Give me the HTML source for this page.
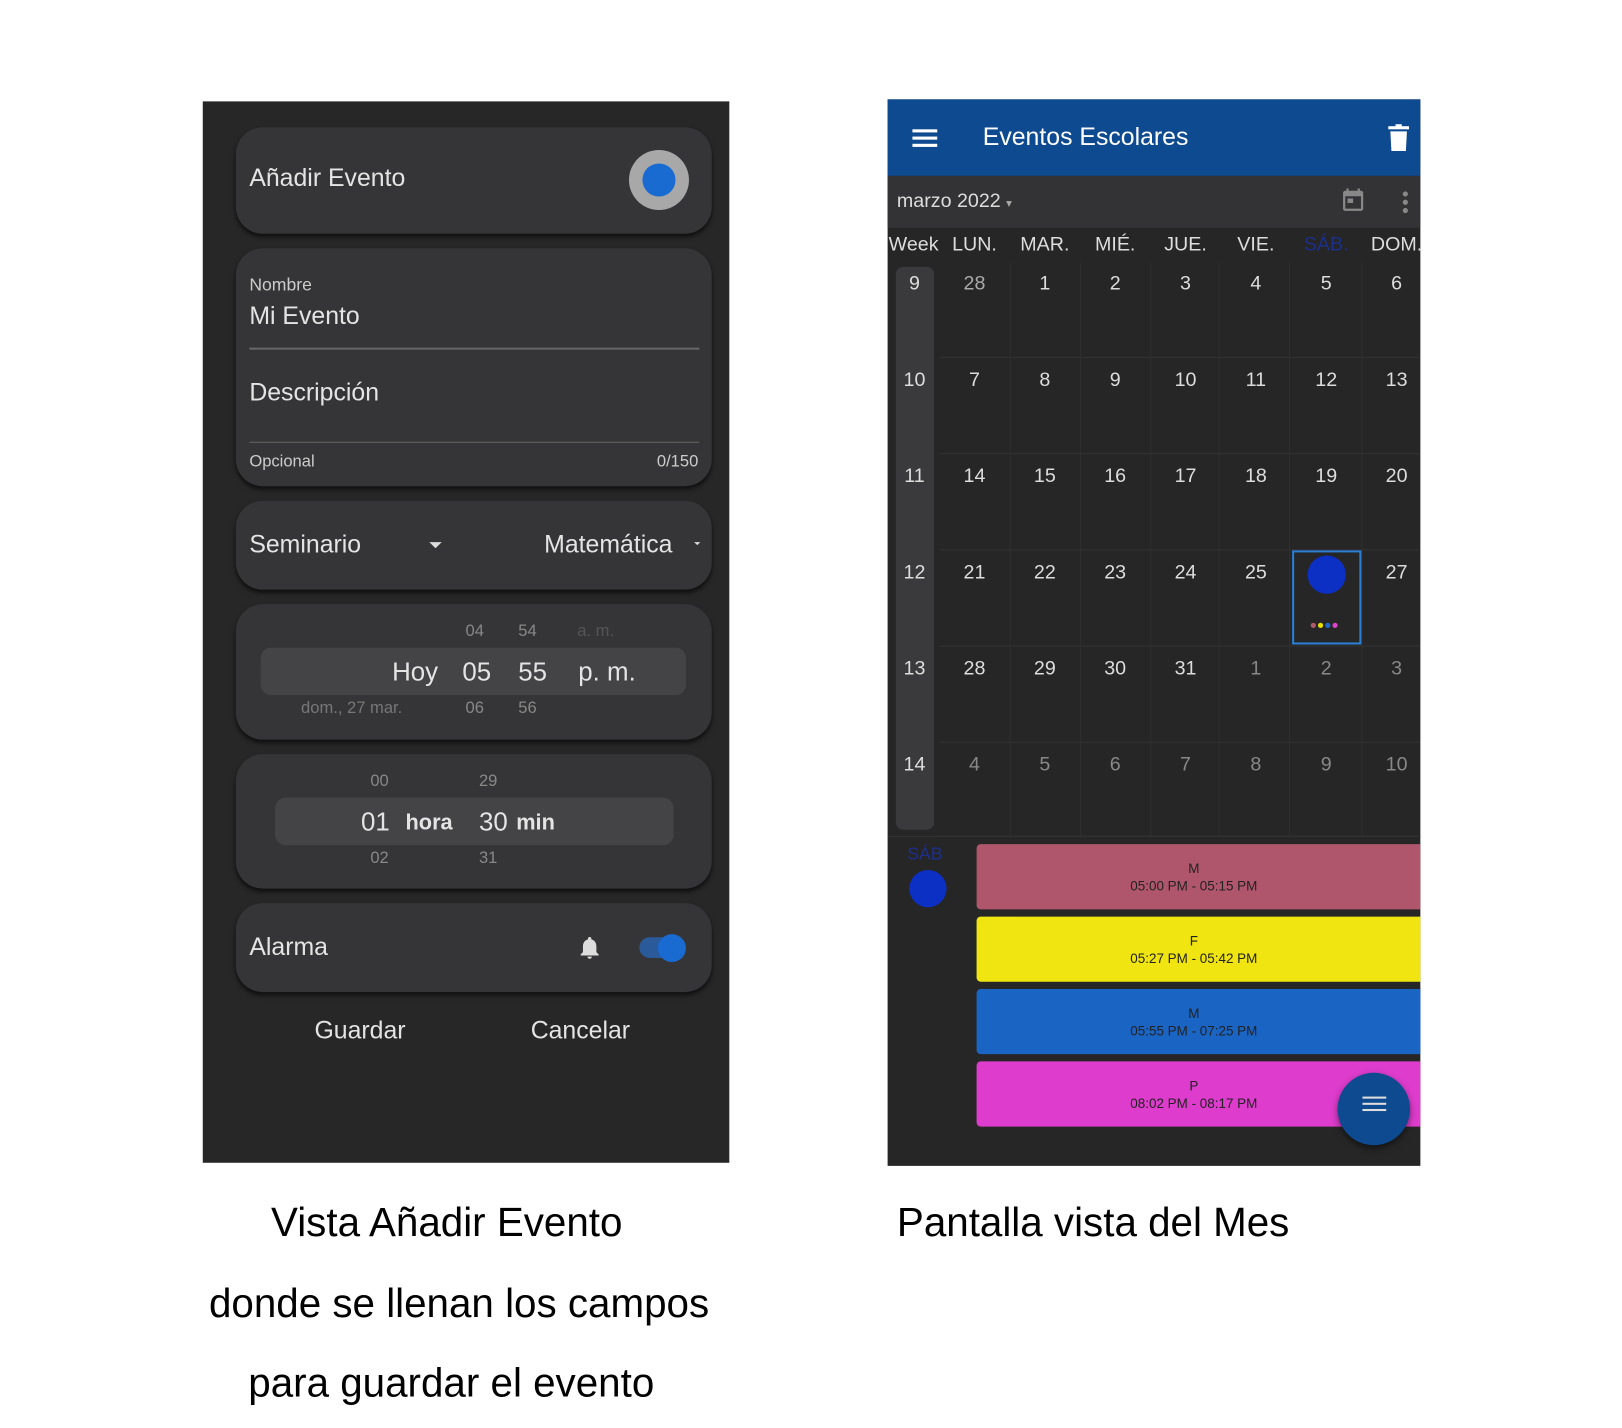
<!DOCTYPE html>
<html><head><meta charset="utf-8"><style>
*{margin:0;padding:0;box-sizing:border-box}
body{width:1622px;height:1428px;background:#fff;overflow:hidden;font-family:"Liberation Sans",sans-serif}
#w{position:absolute;left:0;top:0;width:1560px;height:1373px;transform:scale(1.0345);transform-origin:0 0}
.a{position:absolute}
.lp{left:196px;top:98px;width:509px;height:1026px;background:#272727}
.card{position:absolute;left:32px;width:460px;background:#353537;border-radius:26px;box-shadow:0 3px 4px rgba(0,0,0,.6)}
.t{position:absolute;color:#e4e4e4;white-space:nowrap}
.rp{left:858px;top:96px;width:515px;height:1031px;background:#262626;overflow:hidden}
.num{position:absolute;width:68px;text-align:center;font-size:19px;color:#ddd}
.ev{position:absolute;left:86px;width:440px;height:63px;border-radius:4px;text-align:center;font-size:13px;color:#222;line-height:17px;padding-top:15px;padding-right:20px}
.cap{position:absolute;font-size:39px;color:#000;white-space:nowrap}
</style></head><body><div id="w">
<div class="a lp">
 <div class="card" style="top:25px;height:103px">
  <div class="t" style="left:13px;top:36px;font-size:24px">Añadir Evento</div>
  <div class="a" style="left:380px;top:22px;width:58px;height:58px;border-radius:50%;background:#a8a8a8"></div>
  <div class="a" style="left:393px;top:35px;width:32px;height:32px;border-radius:50%;background:#1a6bd1"></div>
 </div>
 <div class="card" style="top:142px;height:230px">
  <div class="t" style="left:13px;top:26px;font-size:17px;color:#ccc">Nombre</div>
  <div class="t" style="left:13px;top:52px;font-size:24px">Mi Evento</div>
  <div class="a" style="left:13px;top:96px;width:435px;height:2px;background:#666"></div>
  <div class="t" style="left:13px;top:126px;font-size:24px">Descripción</div>
  <div class="a" style="left:13px;top:187px;width:435px;height:1px;background:#666"></div>
  <div class="t" style="left:13px;top:198px;font-size:16px;color:#ccc">Opcional</div>
  <div class="t" style="right:13px;top:198px;font-size:16px;color:#ccc">0/150</div>
 </div>
 <div class="card" style="top:386px;height:86px">
  <div class="t" style="left:13px;top:29px;font-size:24px">Seminario</div>
  <div class="a" style="left:187px;top:40px;border:6px solid transparent;border-top:6px solid #ddd"></div>
  <div class="t" style="left:298px;top:29px;font-size:24px">Matemática</div>
  <div class="a" style="left:443px;top:40px;border:3px solid transparent;border-top:3px solid #ddd"></div>
 </div>
 <div class="card" style="top:486px;height:131px">
  <div class="a" style="left:24px;top:42px;width:411px;height:46px;border-radius:10px;background:#444447"></div>
  <div class="t" style="left:222px;top:18px;font-size:16px;color:#888">04</div>
  <div class="t" style="left:273px;top:18px;font-size:16px;color:#888">54</div>
  <div class="t" style="left:330px;top:18px;font-size:16px;color:#555">a. m.</div>
  <div class="t" style="left:151px;top:52px;font-size:25px">Hoy</div>
  <div class="t" style="left:219px;top:52px;font-size:25px">05</div>
  <div class="t" style="left:273px;top:52px;font-size:25px">55</div>
  <div class="t" style="left:331px;top:52px;font-size:25px">p. m.</div>
  <div class="t" style="left:63px;top:92px;font-size:16px;color:#777">dom., 27 mar.</div>
  <div class="t" style="left:222px;top:92px;font-size:16px;color:#888">06</div>
  <div class="t" style="left:273px;top:92px;font-size:16px;color:#888">56</div>
 </div>
 <div class="card" style="top:631px;height:130px">
  <div class="a" style="left:38px;top:42px;width:385px;height:46px;border-radius:10px;background:#444447"></div>
  <div class="t" style="left:130px;top:18px;font-size:16px;color:#888">00</div>
  <div class="t" style="left:235px;top:18px;font-size:16px;color:#888">29</div>
  <div class="t" style="left:121px;top:52px;font-size:25px">01</div>
  <div class="t" style="left:164px;top:55px;font-size:21px;font-weight:bold">hora</div>
  <div class="t" style="left:235px;top:52px;font-size:25px">30</div>
  <div class="t" style="left:271px;top:55px;font-size:21px;font-weight:bold">min</div>
  <div class="t" style="left:130px;top:92px;font-size:16px;color:#888">02</div>
  <div class="t" style="left:235px;top:92px;font-size:16px;color:#888">31</div>
 </div>
 <div class="card" style="top:775px;height:86px">
  <div class="t" style="left:13px;top:29px;font-size:24px">Alarma</div>
  <svg class="a" style="left:329px;top:30px" width="26" height="26" viewBox="0 0 24 24"><path fill="#ddd" d="M12 22a2 2 0 0 0 2-2h-4a2 2 0 0 0 2 2zm6-6v-5c0-3.1-1.6-5.600-4.5-6.3V4a1.5 1.5 0 0 0-3 0v.7C7.6 5.4 6 7.9 6 11v5l-2 2v1h16v-1z"/></svg>
  <div class="a" style="left:390px;top:33px;width:42px;height:20px;border-radius:10px;background:#2a5a9a"></div>
  <div class="a" style="left:408px;top:30px;width:27px;height:27px;border-radius:50%;background:#1a6bd1"></div>
 </div>
 <div class="t" style="left:108px;top:885px;font-size:24px">Guardar</div>
 <div class="t" style="left:317px;top:885px;font-size:24px">Cancelar</div>
</div>

<div class="a rp">
 <div class="a" style="left:0;top:0;width:515px;height:74px;background:#0d4a8f"></div>
 <div class="a" style="left:24px;top:29px;width:24px;height:3px;background:#fff;box-shadow:0 7px 0 #fff,0 14px 0 #fff"></div>
 <div class="t" style="left:92px;top:23px;font-size:24px;color:#fff">Eventos Escolares</div>
 <svg class="a" style="left:483px;top:24px" width="22" height="26" viewBox="0 0 22 26"><rect x="1" y="2" width="20" height="3" fill="#fff"/><rect x="8" y="0" width="6" height="3" fill="#fff"/><path d="M3 7h16l-1 19H4z" fill="#fff"/></svg>
 <div class="a" style="left:0;top:74px;width:515px;height:50px;background:#333335"></div>
 <div class="t" style="left:9px;top:88px;font-size:19px;color:#ddd">marzo 2022 <span style="font-size:11px;color:#aaa">▾</span></div>
 <svg class="a" style="left:437px;top:84px" width="26" height="26" viewBox="0 0 24 24"><path fill="#888" d="M19 4h-1V2h-2v2H8V2H6v2H5a2 2 0 0 0-2 2v14a2 2 0 0 0 2 2h14a2 2 0 0 0 2-2V6a2 2 0 0 0-2-2zm0 16H5V9h14zM7 11h5v4H7z"/></svg>
 <div class="a" style="left:498px;top:89px;width:5px;height:5px;border-radius:50%;background:#888;box-shadow:0 8px 0 #888,0 16px 0 #888"></div>
 <div class="t" style="left:1px;top:130px;font-size:19px;color:#ddd">Week</div>
 <div class="num" style="left:50px;top:130px">LUN.</div>
 <div class="num" style="left:118px;top:130px">MAR.</div>
 <div class="num" style="left:186px;top:130px">MIÉ.</div>
 <div class="num" style="left:254px;top:130px">JUE.</div>
 <div class="num" style="left:322px;top:130px">VIE.</div>
 <div class="num" style="left:390px;top:130px;color:#1c2f8a">SÁB.</div>
 <div class="num" style="left:458px;top:130px">DOM.</div>
 <div class="a" style="left:8px;top:162px;width:37px;height:544px;border-radius:7px;background:#3a3a3c"></div>
 <div class="a" style="left:50px;top:249px;width:465px;height:1px;background:#333;box-shadow:0 93px 0 #333,0 186px 0 #333,0 279px 0 #333,0 372px 0 #333,0 463px 0 #333"></div>
 <div class="a" style="left:118px;top:158px;width:1px;height:555px;background:#2f2f2f;box-shadow:68px 0 0 #2f2f2f,136px 0 0 #2f2f2f,202px 0 0 #2f2f2f,270px 0 0 #2f2f2f,340px 0 0 #2f2f2f"></div>
 <div class="a" style="left:391px;top:436px;width:67px;height:91px;border:2px solid #2a7fd4"></div>
 <div class="a" style="left:406px;top:441px;width:37px;height:37px;border-radius:50%;background:#0c2fc4"></div>
 <div class="a" style="left:409px;top:506px;width:5px;height:5px;border-radius:50%;background:#b05a70;box-shadow:7px 0 0 #e7e000,14px 0 0 #2266cc,21px 0 0 #dd44cc"></div>
 <div id="grid"></div>
 <div class="a" style="left:0;top:712px;width:515px;height:1px;background:#333"></div>
 <div class="t" style="left:19px;top:720px;font-size:17px;color:#1c2f8a">SÁB</div>
 <div class="a" style="left:21px;top:745px;width:36px;height:36px;border-radius:50%;background:#0c2fc4"></div>
 <div class="ev" style="top:720px;background:#b0566c">M<br>05:00 PM - 05:15 PM</div>
 <div class="ev" style="top:790px;background:#f0e510">F<br>05:27 PM - 05:42 PM</div>
 <div class="ev" style="top:860px;background:#1a64c4">M<br>05:55 PM - 07:25 PM</div>
 <div class="ev" style="top:930px;background:#dd3ccc">P<br>08:02 PM - 08:17 PM</div>
 <div class="a" style="left:435px;top:941px;width:70px;height:70px;border-radius:50%;background:#0d4a8f;box-shadow:0 3px 6px rgba(0,0,0,.5)"></div>
 <div class="a" style="left:459px;top:970px;width:23px;height:2px;background:#ddd;box-shadow:0 6px 0 #ddd,0 12px 0 #ddd;margin-top:-6px"></div>
</div>

<div class="cap" style="left:262px;top:1161px">Vista Añadir Evento</div>
<div class="cap" style="left:202px;top:1239px">donde se llenan los campos</div>
<div class="cap" style="left:240px;top:1316px">para guardar el evento</div>
<div class="cap" style="left:867px;top:1161px">Pantalla vista del Mes</div>
</div>
<script>
var rows=[[9,28,1,2,3,4,5,6],[10,7,8,9,10,11,12,13],[11,14,15,16,17,18,19,20],[12,21,22,23,24,25,'',27],[13,28,29,30,31,1,2,3],[14,4,5,6,7,8,9,10]];
var dim=[[1],[],[],[],[5,6,7],[1,2,3,4,5,6,7]];
var h='';
rows.forEach(function(r,i){var y=168+i*93;r.forEach(function(v,j){var x=j==0?-8:50+(j-1)*68;var c=dim[i].indexOf(j)>=0?'#888':'#ddd';if(i==0&&j==1)c='#aaa';h+='<div class="num" style="left:'+x+'px;top:'+y+'px;color:'+c+'">'+v+'</div>';});});
document.getElementById('grid').innerHTML=h;
</script>
</body></html>
